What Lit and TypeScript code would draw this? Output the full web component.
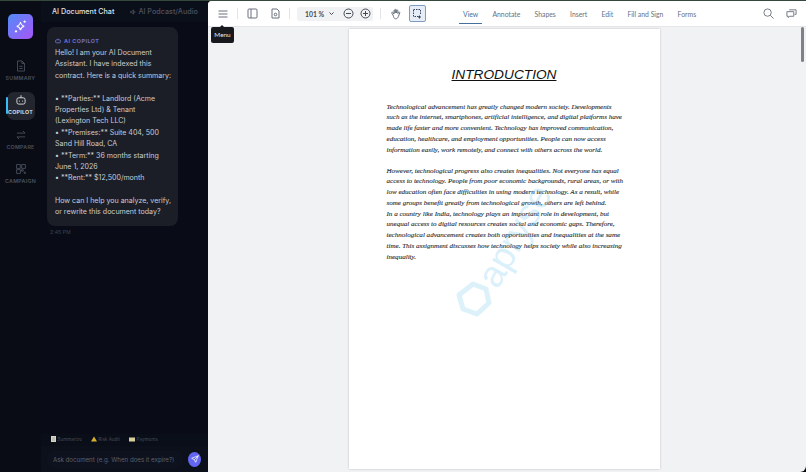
import { LitElement, html, css, svg } from "lit";
import { customElement } from "lit/decorators.js";

const BUBBLE_LINES = [
  "Hello! I am your AI Document",
  "Assistant. I have indexed this",
  "contract. Here is a quick summary:",
  "",
  "• **Parties:** Landlord (Acme",
  "Properties Ltd) & Tenant",
  "(Lexington Tech LLC)",
  "• **Premises:** Suite 404, 500",
  "Sand Hill Road, CA",
  "• **Term:** 36 months starting",
  "June 1, 2026",
  "• **Rent:** $12,500/month",
  "",
  "How can I help you analyze, verify,",
  "or rewrite this document today?",
];

const PARA_ONE = [
  "Technological advancement has greatly changed modern society. Developments",
  "such as the internet, smartphones, artificial intelligence, and digital platforms have",
  "made life faster and more convenient. Technology has improved communication,",
  "education, healthcare, and employment opportunities. People can now access",
  "information easily, work remotely, and connect with others across the world.",
];

const PARA_TWO = [
  "However, technological progress also creates inequalities. Not everyone has equal",
  "access to technology. People from poor economic backgrounds, rural areas, or with",
  "low education often face difficulties in using modern technology. As a result, while",
  "some groups benefit greatly from technological growth, others are left behind.",
  "In a country like India, technology plays an important role in development, but",
  "unequal access to digital resources creates social and economic gaps. Therefore,",
  "technological advancement creates both opportunities and inequalities at the same",
  "time. This assignment discusses how technology helps society while also increasing",
  "inequality.",
];

const TABS = ["View", "Annotate", "Shapes", "Insert", "Edit", "Fill and Sign", "Forms"];

const navIcons = {
  summary: svg`<path d="M4 1.5h7l4 4v12H4z"/><path d="M11 1.5v4h4M7 10h5M7 13.5h5"/>`,
  copilot: svg`<rect x="3" y="6" width="13" height="10" rx="3"/><path d="M9.5 2v4M7 10.5v1.5M12 10.5v1.5"/>`,
  compare: svg`<path d="M3 6.5h13M12.5 3l3.5 3.5M16 12.5H3M6.5 16 3 12.5"/>`,
  campaign: svg`<path d="M2.5 2.5h6v6h-6zM10.5 2.5h6v6h-6zM2.5 10.5h6v6h-6zM10.5 10.5h2.5v2.5h-2.5zM14.5 14.5h2v2h-2z"/>`,
};

@customElement("app-root")
export class AppRoot extends LitElement {
  static styles = css`
    :host {
      display: flex;
      width: 806px;
      height: 472px;
      overflow: hidden;
      background: #060910;
      font-family: "Inter", "Liberation Sans", sans-serif;
      position: relative;
    }
    .topline {
      position: absolute;
      inset: 0 0 auto 0;
      height: 1px;
      background: #34493c;
      z-index: 3;
    }
    .rail {
      width: 41px;
      flex: none;
      background: #090c14;
      display: flex;
      flex-direction: column;
      align-items: center;
      padding-top: 14px;
      box-sizing: border-box;
    }
    .logo {
      width: 25px;
      height: 25px;
      border-radius: 5px;
      background: linear-gradient(135deg, #4f8cf7, #a855f7);
      display: flex;
      align-items: center;
      justify-content: center;
      margin-bottom: 18px;
    }
    .nav {
      position: relative;
      width: 28px;
      height: 28px;
      box-sizing: border-box;
      padding-bottom: 2px;
      margin-bottom: 6.5px;
      border-radius: 7px;
      display: flex;
      flex-direction: column;
      align-items: center;
      justify-content: center;
      gap: 3px;
      color: #4a505e;
      font-size: 5.3px;
      font-weight: 600;
      letter-spacing: 0.25px;
    }
    .nav svg {
      width: 12px;
      height: 12px;
      fill: none;
      stroke: currentColor;
      stroke-width: 1.4;
    }
    .nav.active {
      background: #23262f;
      color: #e6e7ea;
    }
    .nav.active::before {
      content: "";
      position: absolute;
      left: -1px;
      top: 5px;
      width: 2px;
      height: 17px;
      background: #38bdf8;
      border-radius: 1px;
    }
    .chat {
      width: 167px;
      flex: none;
      background: #090c16;
      display: flex;
      flex-direction: column;
    }
    .chat-tabs {
      height: 21px;
      padding: 1px 0 0 11px;
      display: flex;
      align-items: center;
      gap: 16px;
      font-size: 7.2px;
      font-weight: 500;
      color: #dfe1e6;
      white-space: nowrap;
      background: #0b0f1a;
    }
    .chat-tabs .off {
      color: #4d5361;
      display: flex;
      align-items: center;
      gap: 2px;
    }
    .messages {
      flex: 1;
      padding: 5px 0 0 6px;
    }
    .bubble {
      width: 131px;
      height: 199px;
      box-sizing: border-box;
      background: #1b1e27;
      border-radius: 8px;
      padding: 8px 0 0 8px;
    }
    .who {
      font-size: 5.4px;
      font-weight: 700;
      letter-spacing: 0.5px;
      color: #6d70c9;
      height: 12px;
      display: flex;
      align-items: center;
      gap: 3px;
    }
    .line {
      font-size: 7.05px;
      line-height: 11.4px;
      height: 11.4px;
      color: #c9ccd3;
      white-space: nowrap;
    }
    .time {
      font-size: 5.2px;
      color: #3f4450;
      margin: 3px 0 0 3px;
    }
    .chips {
      display: flex;
      padding: 0 0 2px 10px;
      font-size: 4.6px;
      color: #454a57;
      height: 12px;
      box-sizing: border-box;
      align-items: center;
      background: #0a0e18;
    }
    .chip {
      display: flex;
      align-items: center;
      gap: 1.5px;
      margin-right: 9px;
    }
    .composer {
      height: 26px;
      display: flex;
      align-items: center;
      padding: 0 7px 0 6px;
      gap: 5px;
      background: #0c101b;
    }
    .ask {
      flex: 1;
      height: 17px;
      border-radius: 7px;
      background: #0e121e;
      padding-left: 6px;
      line-height: 17px;
      font-size: 6.15px;
      color: #5b606d;
      white-space: nowrap;
    }
    .send {
      width: 13px;
      height: 15px;
      border-radius: 50%;
      background: #6366f1;
      display: flex;
      align-items: center;
      justify-content: center;
      flex: none;
    }
    .viewer {
      flex: 1;
      min-width: 0;
      display: flex;
      flex-direction: column;
      background: #f1f2f4;
      border-radius: 4px 0 6px 0;
      margin-top: 1px;
      overflow: hidden;
      font-family: "Lato", "Liberation Sans", sans-serif;
    }
    .toolbar {
      height: 26px;
      flex: none;
      box-sizing: border-box;
      background: #fff;
      border-bottom: 1px solid #e4e6ea;
      display: flex;
      align-items: center;
      padding-left: 9px;
      position: relative;
      color: #6a717c;
    }
    .toolbar svg {
      fill: none;
      stroke: currentColor;
      stroke-width: 1;
      display: block;
      flex: none;
    }
    .sep {
      width: 1px;
      height: 11px;
      background: #e2e4e8;
      flex: none;
    }
    .zoom {
      width: 76px;
      height: 14px;
      margin: 0 7px;
      background: #f1f2f4;
      border-radius: 2px;
      display: flex;
      align-items: center;
      font-size: 6.8px;
      font-weight: 700;
      color: #454b56;
      padding-left: 8px;
      box-sizing: border-box;
      flex: none;
    }
    .zoom span {
      width: 23px;
    }
    .select {
      width: 17px;
      height: 17px;
      border: 1px solid #7f9cc0;
      background: #e6edf6;
      border-radius: 2px;
      box-sizing: border-box;
      display: flex;
      align-items: center;
      justify-content: center;
      color: #33475f;
      flex: none;
    }
    .tabs {
      display: flex;
      gap: 14.2px;
      margin-left: 37px;
      font-size: 6.85px;
      color: #69707c;
      height: 100%;
      align-items: center;
      flex: none;
    }
    .tab {
      position: relative;
    }
    .tab.on {
      color: #44719c;
    }
    .tab.on::after {
      content: "";
      position: absolute;
      left: -4px;
      right: -4px;
      bottom: -6px;
      height: 1px;
      background: #44719c;
    }
    .end {
      margin-left: auto;
      display: flex;
      gap: 12px;
      padding-right: 9px;
    }
    .tip {
      position: absolute;
      left: 3px;
      top: 26px;
      width: 23px;
      height: 16px;
      background: #17191d;
      color: #e7e8ea;
      font-size: 6.4px;
      line-height: 16px;
      text-align: center;
      border-radius: 2px;
      z-index: 2;
    }
    .tip::before {
      content: "";
      position: absolute;
      left: 8px;
      top: -2px;
      border: 3px solid transparent;
      border-top: 0;
      border-bottom-color: #17191d;
    }
    .canvas {
      flex: 1;
      position: relative;
      display: flex;
      justify-content: center;
      padding: 2px 6px 0 0;
      min-height: 0;
    }
    .thumb {
      position: absolute;
      right: 2px;
      top: 0;
      width: 3px;
      height: 35px;
      background: #7d8188;
      border-radius: 2px;
    }
    .page {
      width: 311px;
      height: 440px;
      background: #fff;
      box-shadow: 0 0 2px rgba(0, 0, 0, 0.22);
      position: relative;
      box-sizing: border-box;
      padding: 37px 0 0 38px;
      flex: none;
    }
    h1 {
      margin: 0 0 18.6px -38px;
      text-align: center;
      font: italic 400 13.7px/17px "Liberation Sans", sans-serif;
      text-decoration: underline;
      color: #111;
    }
    .para {
      margin-bottom: 10.3px;
    }
    .para div {
      font: italic 400 7.05px/10.75px "Liberation Serif", serif;
      -webkit-text-stroke: 0.1px #26282c;
      height: 10.75px;
      white-space: nowrap;
      color: #26282c;
    }
    .mark {
      position: absolute;
      left: 138px;
      top: 235px;
      color: rgba(110, 195, 235, 0.26);
      font: 400 37px/40px "Liberation Sans", sans-serif;
      transform: rotate(-60deg);
      transform-origin: left center;
      pointer-events: none;
    }
    .mark-logo {
      position: absolute;
      left: 107px;
      top: 252px;
      width: 36px;
      height: 36px;
      pointer-events: none;
    }
  `;

  private navItem(label: string, icon: keyof typeof navIcons, active = false) {
    return html`<div class="nav ${active ? "active" : ""}">
      <svg viewBox="0 0 19 19">${navIcons[icon]}</svg>
      <span>${label}</span>
    </div>`;
  }

  render() {
    return html`
      <div class="topline"></div>
      <aside class="rail">
        <div class="logo">
          <svg width="15" height="15" viewBox="0 0 20 20" fill="none" stroke="#fff" stroke-width="1.4">
            <path d="M10 4c.6 3.4 2 5 5 5.6-3 .7-4.4 2.2-5 5.4-.6-3.2-2-4.7-5-5.4 3-.6 4.4-2.2 5-5.6z" />
            <path d="M15.5 2v3M14 3.5h3M4 15v3M2.5 16.5h3" />
          </svg>
        </div>
        ${this.navItem("SUMMARY", "summary")}
        ${this.navItem("COPILOT", "copilot", true)}
        ${this.navItem("COMPARE", "compare")}
        ${this.navItem("CAMPAIGN", "campaign")}
      </aside>

      <section class="chat">
        <div class="chat-tabs">
          <span>AI Document Chat</span>
          <span class="off">
            <svg width="6" height="6" viewBox="0 0 10 10" fill="none" stroke="currentColor" stroke-width="1.4">
              <path d="M1 4v2h2l3 2.5v-7L3 4zM8 3.5v3" />
            </svg>
            AI Podcast/Audio
          </span>
        </div>
        <div class="messages">
          <div class="bubble">
            <div class="who">
              <svg width="6" height="6" viewBox="0 0 10 10" fill="none" stroke="currentColor" stroke-width="1.5">
                <rect x="1" y="3" width="8" height="5" rx="1.5" /><path d="M5 1v2" />
              </svg>
              AI COPILOT
            </div>
            ${BUBBLE_LINES.map((l) => html`<div class="line">${l}</div>`)}
          </div>
          <div class="time">2:45 PM</div>
        </div>
        <div class="chips">
          <span class="chip">
            <svg width="5" height="6" viewBox="0 0 5 6"><rect width="5" height="6" fill="#d8d4c8" /><path d="M1 2h3M1 4h3" stroke="#8a8a80" stroke-width=".6" /></svg>
            Summarize
          </span>
          <span class="chip">
            <svg width="6" height="6" viewBox="0 0 6 6"><path d="M3 .5 6 5.6H0z" fill="#d9b02e" /></svg>
            Risk Audit
          </span>
          <span class="chip">
            <svg width="6" height="5" viewBox="0 0 6 5"><rect width="6" height="4" y=".5" fill="#d8cf9a" /></svg>
            Payments
          </span>
        </div>
        <div class="composer">
          <div class="ask">Ask document (e.g. When does it expire?)</div>
          <div class="send">
            <svg width="8" height="8" viewBox="0 0 12 12" fill="none" stroke="#fff" stroke-width="1.1">
              <path d="M11 1 1 5l4 2 2 4zM11 1 5 7" />
            </svg>
          </div>
        </div>
      </section>

      <main class="viewer">
        <div class="toolbar">
          <svg width="12" height="12" viewBox="0 0 12 12"><path d="M1.5 3h9M1.5 6h9M1.5 9h9" /></svg>
          <div class="sep" style="margin:0 9px 0 8px"></div>
          <svg width="11" height="11" viewBox="0 0 11 11"><rect x="1" y="1" width="9" height="9" rx="1" /><path d="M4 1v9" /></svg>
          <svg style="margin-left:12px" width="11" height="11" viewBox="0 0 11 11"><path d="M2 1h5l2 2v7H2z" /><circle cx="5.5" cy="6.5" r="1.3" /></svg>
          <div class="sep" style="margin-left:8px"></div>
          <div class="zoom">
            <span>101 %</span>
            <svg width="7" height="7" viewBox="0 0 7 7"><path d="M1.5 2.5 3.5 4.5 5.5 2.5" /></svg>
            <svg style="margin-left:8px" width="11" height="11" viewBox="0 0 11 11"><circle cx="5.5" cy="5.5" r="4.5" /><path d="M3 5.5h5" /></svg>
            <svg style="margin-left:6px" width="11" height="11" viewBox="0 0 11 11"><circle cx="5.5" cy="5.5" r="4.5" /><path d="M3 5.5h5M5.5 3v5" /></svg>
          </div>
          <div class="sep"></div>
          <svg style="margin:0 7px 0 9px" width="12" height="12" viewBox="0 0 12 12">
            <path d="M3 7 1.8 5.2c-.5-.8.5-1.4 1-.7L4 6V2.6c0-.9 1.1-.9 1.1 0V5l.1-3c0-.9 1.1-.9 1.1 0l.1 3 .4-2.4c.2-.9 1.2-.7 1.1.2L7.8 5.6l.9-1.2c.5-.7 1.4-.2 1 .6L8.4 8.4C7.8 10 7 10.8 5.6 10.8 4.2 10.8 3.7 9.5 3 7z" />
          </svg>
          <div class="select">
            <svg width="11" height="11" viewBox="0 0 11 11"><path d="M1.5 1.5h7v5M6.5 8.5h-5v-7" stroke-dasharray="1.5 1" /><path d="M7.5 7.5v3M6 9h3" /></svg>
          </div>
          <div class="tabs">
            ${TABS.map((t, i) => html`<span class="tab ${i === 0 ? "on" : ""}">${t}</span>`)}
          </div>
          <div class="end">
            <svg width="11" height="11" viewBox="0 0 12 12"><circle cx="5" cy="5" r="4" /><path d="m8 8 3.5 3.5" /></svg>
            <svg width="11" height="11" viewBox="0 0 12 12"><path d="M1 4h7.5v5H4L2.5 10.5V9H1z" /><path d="M3.5 2H11v5H9.5" /></svg>
          </div>
          <div class="tip">Menu</div>
        </div>
        <div class="canvas">
          <div class="page">
            <h1>INTRODUCTION</h1>
            <div class="para">${PARA_ONE.map((l) => html`<div>${l}</div>`)}</div>
            <div class="para">${PARA_TWO.map((l) => html`<div>${l}</div>`)}</div>
            <div class="mark">apryse</div>
            <svg class="mark-logo" viewBox="0 0 36 36" fill="none" stroke="rgba(110,195,235,0.24)" stroke-width="5" stroke-linejoin="round">
              <path d="M17 3 30 8l3 14-12 11-14-5L3 14z" />
            </svg>
          </div>
          <div class="thumb"></div>
        </div>
      </main>
    `;
  }
}
